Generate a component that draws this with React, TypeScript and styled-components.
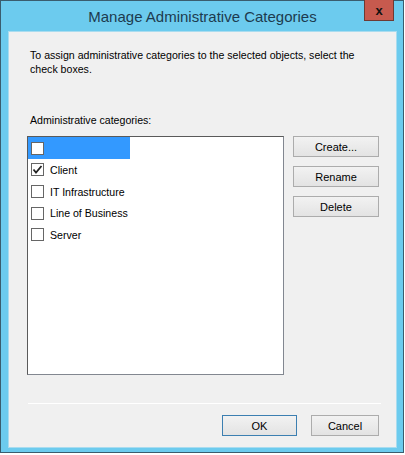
import React from "react";
import styled, { createGlobalStyle } from "styled-components";

const Global = createGlobalStyle`
  html, body { margin: 0; padding: 0; background: #ffffff; }
  * { box-sizing: border-box; }
`;

const Window = styled.div`
  width: 404px;
  height: 453px;
  border: 1px solid #3a5d6e;
  background: #6ccbee;
  display: flex;
  flex-direction: column;
  padding: 0 6px 4px 7px;
  font-family: "Liberation Sans", Arial, sans-serif;
  color: #000;
`;

const TitleBar = styled.div`
  position: relative;
  flex-shrink: 0;
  height: 30px;
  display: flex;
  align-items: center;
  justify-content: center;
  font-size: 15px;
  color: #1d3b4f;
`;

const CloseButton = styled.div`
  position: absolute;
  top: -1px;
  right: 3px;
  width: 30px;
  height: 21px;
  background: #c75a4e;
  border: 1px solid #6e3a33;
  border-top: none;
  display: flex;
  align-items: center;
  justify-content: center;
  font-weight: bold;
  font-size: 13px;
  color: #111;
`;

const Client = styled.div`
  flex: 1;
  min-height: 0;
  background: #f0f0f0;
  border: 1px solid #a9dcef;
  display: flex;
  flex-direction: column;
  padding: 16px 16px 12px 18px;
  font-size: 10.6px;
`;

const Intro = styled.p`
  margin: 0 0 0 3px;
  line-height: 14px;
  white-space: nowrap;
`;

const Label = styled.div`
  margin: 37px 0 0 3px;
  line-height: 14px;
`;

const Body = styled.div`
  display: flex;
  gap: 9px;
  margin-top: 9px;
`;

const ListBox = styled.div`
  width: 257px;
  height: 239px;
  background: #ffffff;
  border: 1px solid #828790;
  border-top-color: #5a5a5a;
  border-left-color: #5a5a5a;
  display: flex;
  flex-direction: column;
`;

const Row = styled.div<{ $selected?: boolean }>`
  height: ${(p) => (p.$selected ? 22 : 21.7)}px;
  display: flex;
  align-items: center;
  gap: 6px;
  padding-left: 3px;
  width: ${(p) => (p.$selected ? "102px" : "auto")};
  background: ${(p) => (p.$selected ? "#3399ff" : "transparent")};
`;

const Box = styled.span`
  width: 13px;
  height: 13px;
  background: #fff;
  border: 1px solid #666;
  display: inline-flex;
  align-items: center;
  justify-content: center;
`;

const Buttons = styled.div`
  display: flex;
  flex-direction: column;
  gap: 9px;
`;

const Button = styled.div<{ $w?: number; $default?: boolean }>`
  width: ${(p) => p.$w ?? 86}px;
  height: 21px;
  background: linear-gradient(#f2f2f2, #e3e3e3);
  border: 1px solid ${(p) => (p.$default ? "#3c7fb1" : "#acacac")};
  display: flex;
  align-items: center;
  justify-content: center;
  font-size: 11px;
`;

const Separator = styled.div`
  height: 1px;
  background: #a0a0a0;
  margin: 28px 0 0 1px;
  width: 353px;
  border-bottom: 1px solid #fff;
  box-sizing: content-box;
`;

const Footer = styled.div`
  display: flex;
  justify-content: flex-end;
  gap: 14px;
  margin-top: 11px;
  padding-right: 1px;
`;

const Check = () => (
  <svg width="11" height="11" viewBox="0 0 11 11">
    <path d="M1.5 5.5 L4 8.5 L9.5 2" fill="none" stroke="#222" strokeWidth="1.8" />
  </svg>
);

const items = [
  { label: "", checked: false, selected: true },
  { label: "Client", checked: true },
  { label: "IT Infrastructure", checked: false },
  { label: "Line of Business", checked: false },
  { label: "Server", checked: false },
];

export default function App() {
  return (
    <>
      <Global />
      <Window>
        <TitleBar>
          Manage Administrative Categories
          <CloseButton>x</CloseButton>
        </TitleBar>
        <Client>
          <Intro>
            To assign administrative categories to the selected objects, select the
            <br />
            check boxes.
          </Intro>
          <Label>Administrative categories:</Label>
          <Body>
            <ListBox>
              {items.map((it, i) => (
                <Row key={i} $selected={it.selected}>
                  <Box>{it.checked && <Check />}</Box>
                  {it.label}
                </Row>
              ))}
            </ListBox>
            <Buttons>
              <Button>Create...</Button>
              <Button>Rename</Button>
              <Button>Delete</Button>
            </Buttons>
          </Body>
          <Separator />
          <Footer>
            <Button $w={75} $default>OK</Button>
            <Button $w={68}>Cancel</Button>
          </Footer>
        </Client>
      </Window>
    </>
  );
}
